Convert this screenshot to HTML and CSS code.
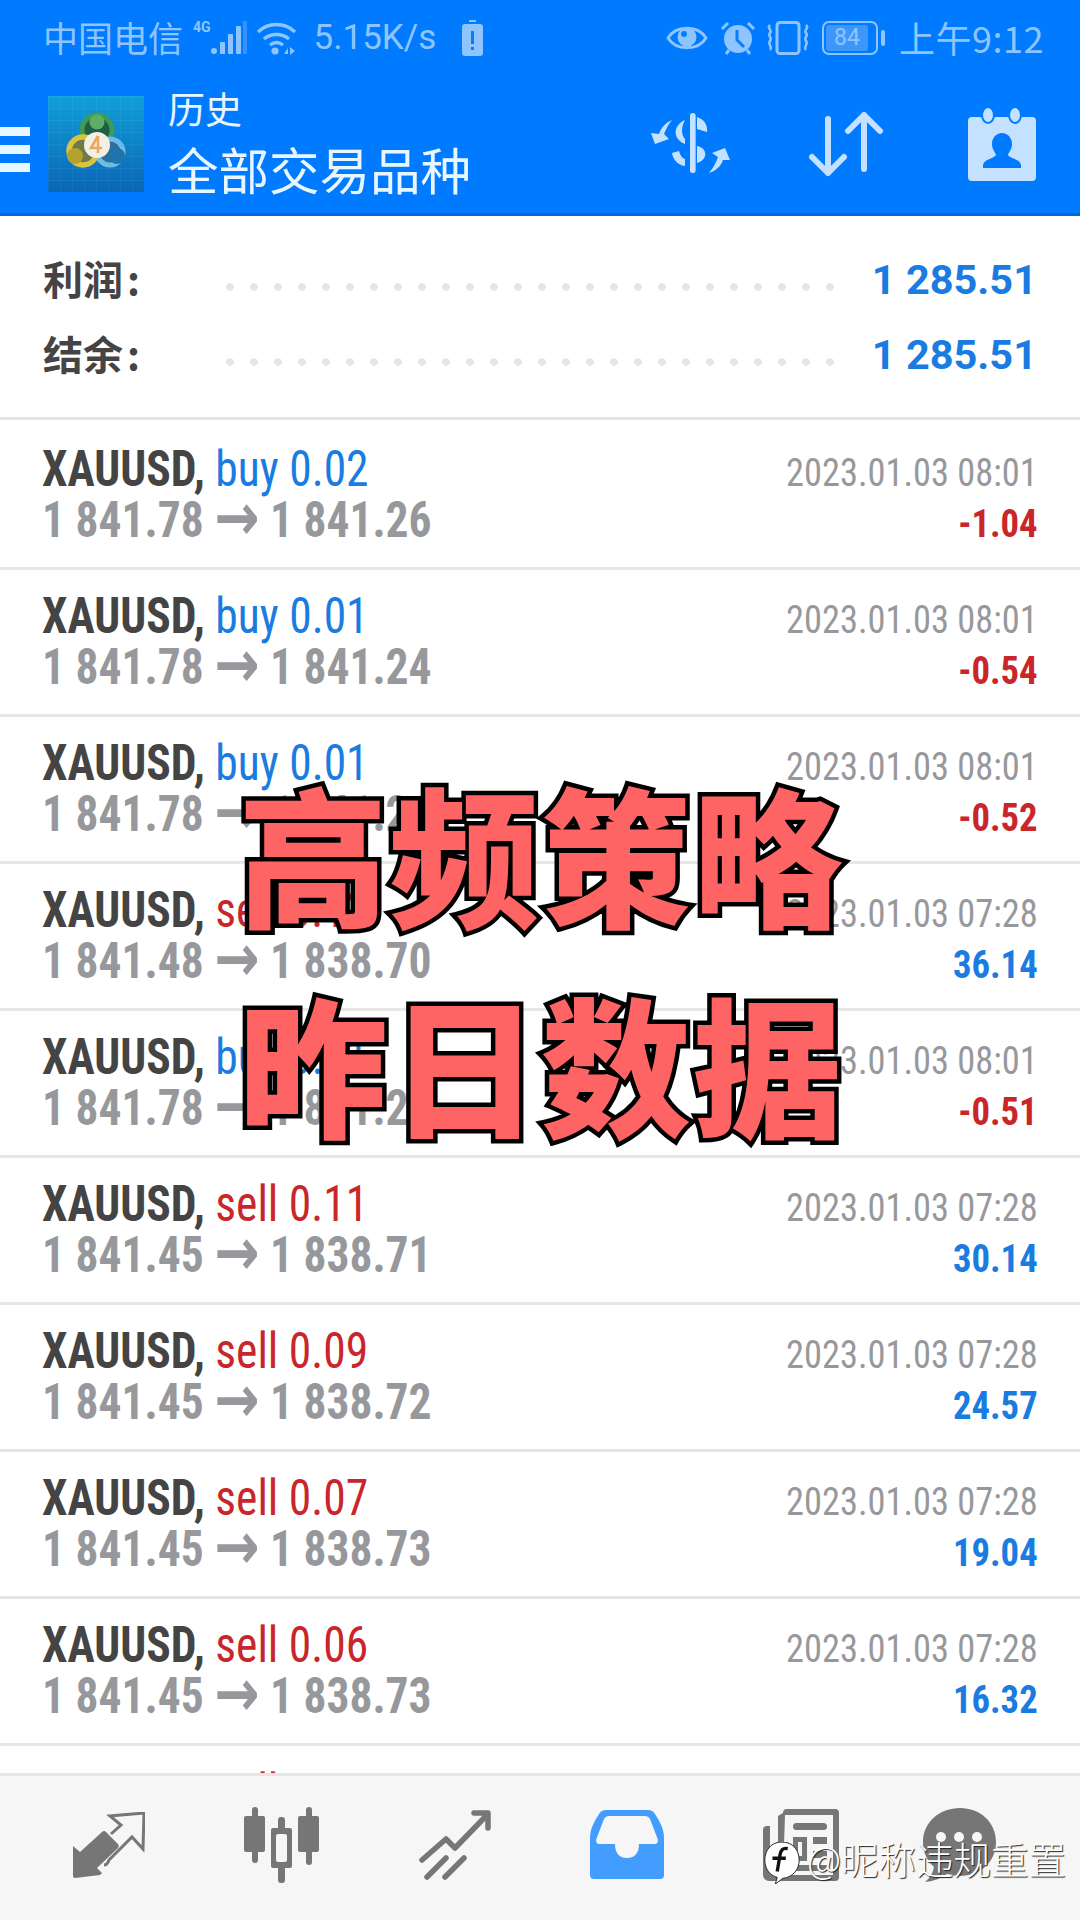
FILE: index.html
```html
<!DOCTYPE html>
<html lang="zh">
<head>
  <meta charset="UTF-8">
  <title>历史</title>
  <link rel="stylesheet" href="styles.css">
</head>
<body>
  <div class="top">
    <div class="status">
      <div class="status-left">
        <span class="carrier">中国电信</span>
        <span class="net">4G</span>
        <svg class="signal" width="36" height="34" viewBox="0 0 36 34"><g fill="currentColor"><circle cx="3" cy="30" r="3"/><rect x="9" y="21" width="5" height="12" rx="1"/><rect x="17" y="13" width="5" height="20" rx="1"/><rect x="25" y="5" width="5" height="28" rx="1"/><rect x="32" y="0" width="4" height="33" opacity=".35"/></g></svg>
        <svg class="wifi" width="41" height="34" viewBox="0 0 41 34"><g fill="none" stroke="currentColor" stroke-width="3.4"><path d="M2 11C12 1 29 1 39 11"/><path d="M8 18c7-6 18-6 25 0"/><path d="M14 24c4-3 9-3 13 0"/></g><circle cx="19" cy="30" r="3.6" fill="currentColor"/><path d="M28 33l4-6v6zM34 26l5 4-5 4z" fill="currentColor"/></svg>
        <span class="speed">5.15K/s</span>
        <svg class="saver" width="21" height="36" viewBox="0 0 21 36"><path d="M7 0h7v2H7zM3 4h15a3 3 0 0 1 3 3v26a3 3 0 0 1-3 3H3a3 3 0 0 1-3-3V7a3 3 0 0 1 3-3z" fill="currentColor"/><path d="M9 11h3v13H9zM9 27h3v3H9z" fill="#0a7cf5"/></svg>
      </div>
      <div class="status-right">
        <svg width="42" height="30" viewBox="0 0 42 30"><path d="M2 15C10 2 32 2 40 15 32 28 10 28 2 15z" fill="none" stroke="currentColor" stroke-width="3"/><circle cx="21" cy="14" r="9.5" fill="currentColor"/><circle cx="18" cy="11" r="3" fill="#0a7cf5"/></svg>
        <svg width="36" height="34" viewBox="0 0 36 34"><circle cx="18" cy="18" r="14" fill="currentColor"/><path d="M17 9v10l7 7" fill="none" stroke="#0a7cf5" stroke-width="3"/><path d="M2 8l6-6M34 8l-6-6M6 33l3-4M30 33l-3-4" stroke="currentColor" stroke-width="3"/></svg>
        <svg class="vibrate" width="44" height="34" viewBox="0 0 44 34"><rect x="11" y="1.500" width="22" height="31" rx="3" fill="none" stroke="currentColor" stroke-width="3"/><path d="M4 4c-4 3 3 5 0 8s3 5 0 8 3 5 0 9M40 4c4 3-3 5 0 8s-3 5 0 8-3 5 0 9" fill="none" stroke="currentColor" stroke-width="2.500"/></svg>
        <div class="batt"><span class="batt-box"><span class="batt-fill">84</span></span><span class="batt-cap"></span></div>
        <span class="clock">上午9:12</span>
      </div>
    </div>
    <div class="header">
      <div class="burger"><i></i><i></i><i></i></div>
      <svg class="logo" width="96" height="96" viewBox="0 0 96 96">
        <defs>
          <linearGradient id="bg" x1="0" y1="0" x2="0" y2="1"><stop offset="0" stop-color="#0f9fd8"/><stop offset="1" stop-color="#0a66b6"/></linearGradient>
          <pattern id="grid" width="12" height="12" patternUnits="userSpaceOnUse"><path d="M12 0H0V12" fill="none" stroke="#fff" stroke-opacity=".1"/></pattern>
        </defs>
        <rect width="96" height="96" fill="url(#bg)"/>
        <rect width="96" height="96" fill="url(#grid)"/>
        <circle cx="49" cy="34" r="15" fill="#1f5f45" stroke="#3d9a58" stroke-width="5"/>
        <circle cx="62" cy="56" r="13" fill="#2b6f9a" stroke="#6cbde6" stroke-width="5"/>
        <circle cx="35" cy="55" r="14" fill="#6f7a45" stroke="#d8c440" stroke-width="5.500"/>
        <circle cx="49" cy="26" r="7.500" fill="#5fae68"/>
        <circle cx="27" cy="60" r="8" fill="#b3a22e"/>
        <circle cx="69" cy="60" r="8" fill="#1f74ae"/>
        <circle cx="49" cy="49" r="13" fill="#f4efe4"/>
        <path d="M50 40l-7 12h11M50 40v17" fill="none" stroke="#eda65a" stroke-width="2.500"/>
      </svg>
      <div class="titles">
        <div class="title-sm">历史</div>
        <div class="title-lg">全部交易品种</div>
      </div>
      <div class="actions">
        <svg class="act-dollar" width="80" height="62" viewBox="0 0 80 62" fill="currentColor">
          <rect x="39" y="0" width="5.600" height="60" rx="2.800"/>
          <path d="M46 4C52 6 57 11 56 19L46 16z"/>
          <path d="M34 7C22 12 21 26 34 31V26C30 22 30 14 34 7z"/>
          <path d="M21 40C22 47 27 52 34 53V46C31 45 29 42 28 38z"/>
          <path d="M46 33C57 35 57 47 46 50z"/>
          <path d="M21 7C14 10 10 15 8 21L0 20 4 31 18 26 13 21C15 16 17 12 21 7z"/>
          <path d="M58 60C65 58 70 53 72 47L79 47 74 35 61 40 67 44C65 50 62 55 58 60z"/>
        </svg>
        <svg class="act-arrows" width="76" height="66" viewBox="0 0 76 66" fill="none" stroke="currentColor" stroke-width="6" stroke-linecap="round" stroke-linejoin="round">
          <path d="M19 8v54M3 46l16 16 16-16"/>
          <path d="M55 58V4M39 20L55 4l16 16"/>
        </svg>
        <svg class="act-cal" width="68" height="74" viewBox="0 0 68 74" fill="currentColor">
          <path d="M4 10h60a4 4 0 0 1 4 4v56a4 4 0 0 1-4 4H4a4 4 0 0 1-4-4V14a4 4 0 0 1 4-4z"/>
          <ellipse cx="20" cy="8" rx="6" ry="8" stroke="#007aff" stroke-width="2"/>
          <ellipse cx="47" cy="8" rx="6" ry="8" stroke="#007aff" stroke-width="2"/>
          <path d="M34 26c6 0 10 5 10 11 0 5-3 8-4 11 1 3 12 4 13 10v3H15v-3c1-6 12-7 13-10-1-3-4-6-4-11 0-6 4-11 10-11z" fill="#007aff"/>
        </svg>
      </div>
    </div>
  </div>

  <div class="summary">
    <div class="sum-row"><span class="sum-label">利润<i>:</i></span><span class="dots"></span><span class="sum-value">1 285.51</span></div>
    <div class="sum-row"><span class="sum-label">结余<i>:</i></span><span class="dots"></span><span class="sum-value">1 285.51</span></div>
  </div>

  <div class="list">
    <div class="row">
      <div class="row-line"><span class="sym">XAUUSD,</span> <span class="buy">buy 0.02</span></div>
      <div class="row-date">2023.01.03 08:01</div>
      <div class="row-line price">1 841.78 <b>→</b> 1 841.26</div>
      <div class="row-pl loss">-1.04</div>
    </div>
    <div class="row">
      <div class="row-line"><span class="sym">XAUUSD,</span> <span class="buy">buy 0.01</span></div>
      <div class="row-date">2023.01.03 08:01</div>
      <div class="row-line price">1 841.78 <b>→</b> 1 841.24</div>
      <div class="row-pl loss">-0.54</div>
    </div>
    <div class="row">
      <div class="row-line"><span class="sym">XAUUSD,</span> <span class="buy">buy 0.01</span></div>
      <div class="row-date">2023.01.03 08:01</div>
      <div class="row-line price">1 841.78 <b>→</b> 1 841.26</div>
      <div class="row-pl loss">-0.52</div>
    </div>
    <div class="row">
      <div class="row-line"><span class="sym">XAUUSD,</span> <span class="sell">sell 0.13</span></div>
      <div class="row-date">2023.01.03 07:28</div>
      <div class="row-line price">1 841.48 <b>→</b> 1 838.70</div>
      <div class="row-pl gain">36.14</div>
    </div>
    <div class="row">
      <div class="row-line"><span class="sym">XAUUSD,</span> <span class="buy">buy 0.01</span></div>
      <div class="row-date">2023.01.03 08:01</div>
      <div class="row-line price">1 841.78 <b>→</b> 1 841.27</div>
      <div class="row-pl loss">-0.51</div>
    </div>
    <div class="row">
      <div class="row-line"><span class="sym">XAUUSD,</span> <span class="sell">sell 0.11</span></div>
      <div class="row-date">2023.01.03 07:28</div>
      <div class="row-line price">1 841.45 <b>→</b> 1 838.71</div>
      <div class="row-pl gain">30.14</div>
    </div>
    <div class="row">
      <div class="row-line"><span class="sym">XAUUSD,</span> <span class="sell">sell 0.09</span></div>
      <div class="row-date">2023.01.03 07:28</div>
      <div class="row-line price">1 841.45 <b>→</b> 1 838.72</div>
      <div class="row-pl gain">24.57</div>
    </div>
    <div class="row">
      <div class="row-line"><span class="sym">XAUUSD,</span> <span class="sell">sell 0.07</span></div>
      <div class="row-date">2023.01.03 07:28</div>
      <div class="row-line price">1 841.45 <b>→</b> 1 838.73</div>
      <div class="row-pl gain">19.04</div>
    </div>
    <div class="row">
      <div class="row-line"><span class="sym">XAUUSD,</span> <span class="sell">sell 0.06</span></div>
      <div class="row-date">2023.01.03 07:28</div>
      <div class="row-line price">1 841.45 <b>→</b> 1 838.73</div>
      <div class="row-pl gain">16.32</div>
    </div>
    <div class="row">
      <div class="row-line"><span class="sym">XAUUSD,</span> <span class="sell">sell 0.05</span></div>
    </div>
  </div>

  <div class="tabs">
    <svg width="72" height="66" viewBox="0 0 72 66" fill="currentColor">
      <path d="M0 34l7 6 22-20a3 3 0 0 1 4 0l12 12a3 3 0 0 1 0 4L24 56l5 5-2 2-25 3a2 2 0 0 1-2-2z"/>
      <path d="M38 22l10-9L37 4l34-3-1 36-11-12-23 23c-1 3-3 5-5 5" fill="none" stroke="currentColor" stroke-width="3"/>
    </svg>
    <svg width="76" height="76" viewBox="0 0 76 76" fill="currentColor">
      <rect x="0" y="9" width="21" height="36" rx="2"/><rect x="8" y="0" width="6" height="56" rx="3"/>
      <rect x="27" y="21" width="21" height="40" rx="2"/><rect x="34" y="10" width="7" height="66" rx="3"/><rect x="32" y="27" width="11" height="28" rx="2" fill="#f6f6f6"/>
      <rect x="54" y="9" width="21" height="36" rx="2"/><rect x="62" y="0" width="6" height="58" rx="3"/>
    </svg>
    <svg width="72" height="70" viewBox="0 0 72 70" fill="none" stroke="currentColor" stroke-width="5.500" stroke-linecap="round" stroke-linejoin="round">
      <path d="M3 50l24-21 9 9L68 5M55 3h14v15"/>
      <path d="M8 67l19-19M26 67l19-19"/>
    </svg>
    <svg class="tab-on" width="74" height="70" viewBox="0 0 74 70"><path d="M16 0h42c3 0 5 1 7 4 5 8 9 15 9 24v37a4 4 0 0 1-4 4H4a4 4 0 0 1-4-4V28c0-9 4-16 9-24 2-3 4-4 7-4z" fill="currentColor"/><path d="M19 6h36c2 0 4 1 5 3l8 21c0 2-1 4-3 4H49c0 10-5 14-12 14s-12-4-12-14H9c-2 0-3-2-3-4l8-21c1-2 3-3 5-3z" fill="#f6f6f6"/></svg>
    <svg width="76" height="72" viewBox="0 0 76 72" fill="currentColor">
      <path d="M20 4a4 4 0 0 1 4-4h48a4 4 0 0 1 4 4v64a4 4 0 0 1-4 4H6a6 6 0 0 1-6-6V21a4 4 0 0 1 4-4h3v45h8V7z"/>
      <path d="M22 6h48v60H20z" fill="#f6f6f6"/>
      <rect x="30" y="14" width="34" height="7" rx="3.500"/>
      <path d="M30 28h14v24H30zM35 33v14h4V33z" fill-rule="evenodd"/>
      <rect x="50" y="28" width="14" height="7"/><rect x="50" y="42" width="14" height="7"/><rect x="30" y="56" width="34" height="6"/>
    </svg>
    <svg class="tab-last" width="74" height="74" viewBox="0 0 74 74" fill="currentColor">
      <path d="M37 0c20 0 36 14 36 34S57 68 37 68c-5 0-9-1-13-2-6 4-12 7-22 8 5-4 8-9 9-15C4 53 0 44 0 34 0 14 17 0 37 0z"/>
      <circle cx="18" cy="29" r="5" fill="#f6f6f6"/><circle cx="36" cy="29" r="5" fill="#f6f6f6"/><circle cx="54" cy="29" r="5" fill="#f6f6f6"/>
    </svg>
  </div>

  <div class="promo">
    <div>高频策略</div>
    <div>昨日数据</div>
  </div>

  <div class="mark">
    <svg width="38" height="42" viewBox="0 0 38 44"><path d="M19 0c11 0 18 8 18 19 0 10-7 18-17 19l-8 6 2-7C6 35 1 28 1 19 1 8 8 0 19 0z" fill="#fff" stroke="#222" stroke-width="1"/><path d="M25 7c-5-1-7 1-8 6l-3 18M9 17h14" fill="none" stroke="#111" stroke-width="3.500"/></svg>
    <span>@昵称违规重置</span>
  </div>
</body>
</html>
```

FILE: styles.css
```css
* {
  box-sizing: border-box;
}

body {
  margin: 0;
  width: 1080px;
  height: 1920px;
  position: relative;
  overflow: hidden;
  display: flex;
  flex-direction: column;
  background: #fff;
  font-family: "Roboto Condensed", Roboto, "Noto Sans CJK SC", sans-serif;
}

/* blue top part */
.top {
  background: #007aff;
  border-bottom: 3px solid #0069d4;
  height: 216px;
  flex: none;
}

.status {
  height: 75px;
  display: flex;
  justify-content: space-between;
  align-items: center;
  padding: 0 36px 0 43px;
  color: #8fc5ff;
  font-family: "Noto Sans CJK SC", sans-serif;
}

.status-left,
.status-right {
  display: flex;
  align-items: center;
}

.carrier {
  font-size: 35px;
  line-height: 40px;
  margin-bottom: 2px;
}

.net {
  font: 700 14px Roboto, sans-serif;
  align-self: flex-start;
  margin: 2px 0 0 10px;
}

.wifi {
  margin-left: 9px;
}

.speed {
  font: 400 35px Roboto, sans-serif;
  margin-left: 17px;
  width: 148px;
}

.status-right svg {
  margin-right: 12px;
}

.status-right .vibrate {
  margin: 0 12px 0 -2px;
}

.batt {
  display: flex;
  align-items: center;
  margin-right: 14px;
}

.batt-box {
  width: 56px;
  height: 34px;
  border: 2.5px solid currentColor;
  border-radius: 7px;
  padding: 2px;
  display: flex;
}

.batt-fill {
  width: 42px;
  background: #3d97fb;
  border-radius: 3px;
  font: 400 23px/25px Roboto, sans-serif;
  text-align: center;
}

.batt-cap {
  width: 4px;
  height: 16px;
  margin-left: 3px;
  background: currentColor;
  border-radius: 2px;
}

.clock {
  font-size: 36px;
  line-height: 40px;
  margin-bottom: 2px;
  letter-spacing: .5px;
  white-space: nowrap;
}

.header {
  height: 138px;
  display: flex;
  align-items: center;
  color: #e8f6ff;
  font-family: "Noto Sans CJK SC", sans-serif;
}

.burger {
  width: 30px;
  margin-right: 18px;
  margin-top: 10px;
  display: flex;
  flex-direction: column;
  gap: 9px;
}

.burger i {
  display: block;
  height: 9px;
  background: #e8f6ff;
}

.titles {
  margin: 0 0 5px 24px;
}

.title-sm {
  font-size: 37px;
  line-height: 46px;
  margin-bottom: 7px;
}

.title-lg {
  font-size: 50.5px;
  line-height: 60px;
}

.actions {
  margin-left: auto;
  padding-right: 44px;
  display: flex;
  align-items: center;
  gap: 78px;
  color: #c4e2ff;
}

.act-arrows {
  margin-right: 5px;
}

/* totals */
.summary {
  height: 204px;
  flex: none;
  padding: 26px 43px 0 43px;
  border-bottom: 3px solid #e6e6e6;
}

.sum-row {
  height: 75px;
  display: flex;
  align-items: center;
}

.sum-label {
  width: 183px;
  margin-bottom: 4px;
  font: 700 40px "Noto Sans CJK SC", sans-serif;
  color: #444;
}

.sum-label i {
  font-style: normal;
  margin-left: 4px;
}

.dots {
  flex: 1;
  height: 8px;
  margin-top: 14px;
  background: radial-gradient(circle at 4px 4px, #e5e5e5 3.5px, transparent 4px) 0 0 / 24px 8px repeat-x;
}

.sum-value {
  width: 198px;
  text-align: right;
  font: 700 41.5px Roboto, sans-serif;
  color: #1a7be0;
}

/* trades */
.list {
  flex: 1;
  overflow: hidden;
  padding-top: 3px;
}

.row {
  height: 147px;
  padding: 21px 42px 0;
  border-bottom: 3px solid #e6e6e6;
  display: grid;
  grid-template-columns: 1fr auto;
  grid-template-rows: 51px 51px;
  align-items: center;
}

/* squeezed a bit more, the app's face is narrower than what is installed */
.row-line {
  font-size: 50px;
  line-height: 51px;
  font-stretch: condensed;
  white-space: nowrap;
  transform: scaleX(.91);
  transform-origin: left center;
}

.sym {
  font-weight: 700;
  color: #444;
}

.buy {
  color: #1a7be0;
}

.sell {
  color: #c9262b;
}

.price {
  font-weight: 700;
  color: #97989c;
}

.price b {
  font-family: "DejaVu Sans", sans-serif;
  font-size: 66px;
  line-height: 0;
  vertical-align: -3px;
}

.row-date,
.row-pl {
  padding-top: 6px;
  font-size: 39px;
  font-stretch: condensed;
  text-align: right;
  transform-origin: right center;
}

.row-date {
  color: #97989c;
  transform: scaleX(.933);
}

.row-pl {
  font-weight: 700;
  transform: scaleX(.94);
}

.loss {
  color: #c9262b;
}

.gain {
  color: #1a7be0;
}

/* bottom tabs */
.tabs {
  height: 147px;
  flex: none;
  background: #f6f6f6;
  border-top: 3px solid #e6e6e6;
  display: flex;
  align-items: center;
  gap: 99px;
  padding: 0 0 6px 73px;
  color: #767676;
}

.tabs svg {
  flex: none;
}

.tab-on {
  color: #439dff;
}

.tab-last {
  margin-left: -15px;
}

/* big text pasted over the list */
.promo {
  position: absolute;
  left: 238px;
  top: 746px;
  font: 900 150px/210px "Noto Sans CJK SC", sans-serif;
  letter-spacing: 1.5px;
  white-space: nowrap;
  color: #ff6464;
  -webkit-text-stroke: 9px #000;
  paint-order: stroke fill;
}

.mark {
  position: absolute;
  left: 763px;
  top: 1842px;
  display: flex;
  align-items: flex-start;
  gap: 6px;
  color: #fff;
  font: 300 37.5px/37px "Noto Sans CJK SC", sans-serif;
  text-shadow: 1px 1px 1px #222;
  white-space: nowrap;
}

.mark span {
  margin-top: -3px;
}
```
